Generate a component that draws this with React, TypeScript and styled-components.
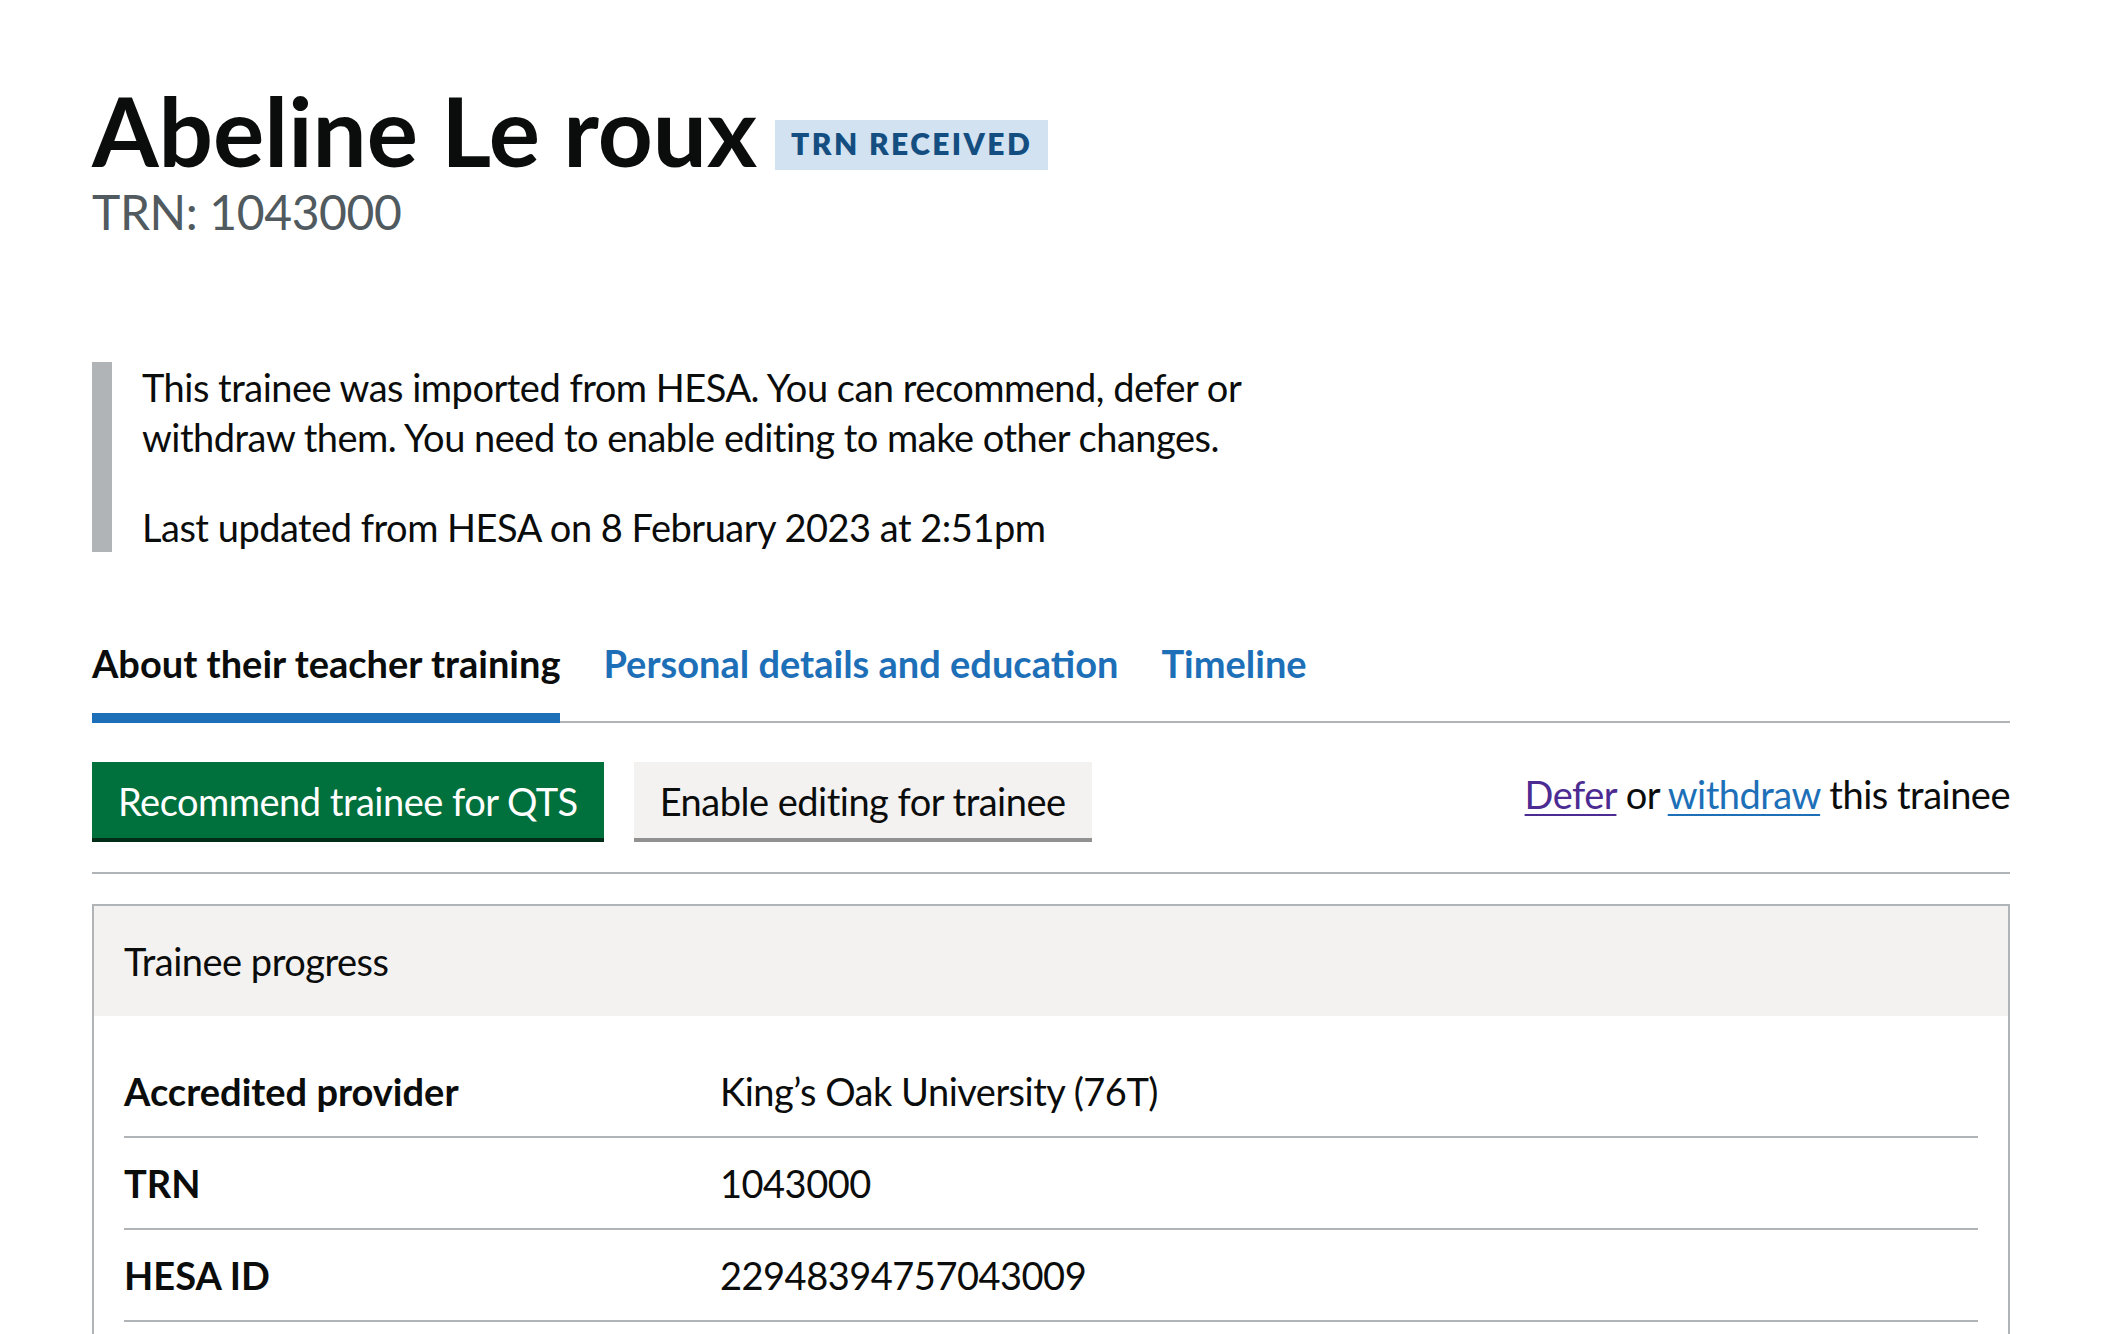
import styled, { createGlobalStyle } from "styled-components";

const FONT = `Lato, "Liberation Sans", Arial, sans-serif`;

const GlobalStyle = createGlobalStyle`
  html, body {
    margin: 0;
    padding: 0;
    background: #ffffff;
  }
  body {
    font-family: ${FONT};
    color: #0b0c0c;
  }
  * {
    box-sizing: border-box;
  }
`;

const Page = styled.main`
  max-width: 1918px;
  margin: 0 auto;
  padding-top: 80px;
`;

const TitleRow = styled.div`
  display: flex;
  align-items: flex-start;
  gap: 18px;
`;

const Title = styled.h1`
  margin: 0;
  font-size: 96px;
  line-height: 100px;
  font-weight: 700;
`;

const Tag = styled.strong`
  margin-top: 40px;
  padding: 8px 16px 12px 16px;
  font-size: 30px;
  line-height: 30px;
  font-weight: 800;
  letter-spacing: 2.4px;
  text-transform: uppercase;
  background: #d2e2f1;
  color: #144e81;
`;

const Caption = styled.p`
  margin: 7px 0 0;
  font-size: 48px;
  line-height: 50px;
  letter-spacing: -0.4px;
  color: #505a5f;
`;

const Inset = styled.div`
  margin-top: 125px;
  max-width: 1259px;
  padding: 0 30px;
  border-left: 20px solid #b1b4b6;
`;

const Para = styled.p`
  margin: 0 0 40px;
  font-size: 38px;
  line-height: 50px;
  letter-spacing: -0.5px;
  &:last-child {
    margin-bottom: 0;
  }
`;

const TabList = styled.ul`
  display: flex;
  gap: 43px;
  margin: 86px 0 0;
  padding: 0;
  list-style: none;
  border-bottom: 2px solid #b1b4b6;
`;

const Tab = styled.li<{ $active?: boolean }>`
  margin-bottom: -2px;
  padding-bottom: 25px;
  border-bottom: 10px solid ${({ $active }) => ($active ? "#1d70b8" : "transparent")};
  font-size: 38px;
  line-height: 50px;
  font-weight: 700;
  color: ${({ $active }) => ($active ? "#0b0c0c" : "#1d70b8")};
`;

const Actions = styled.div`
  display: flex;
  align-items: flex-start;
  gap: 30px;
  margin-top: 39px;
  padding-bottom: 34px;
  border-bottom: 2px solid #b1b4b6;
`;

const Button = styled.button<{ $secondary?: boolean }>`
  margin: 0;
  padding: 16px 22px 14px;
  border: 4px solid transparent;
  border-radius: 0;
  font-family: ${FONT};
  font-size: 38px;
  line-height: 38px;
  font-weight: 400;
  letter-spacing: -0.5px;
  cursor: pointer;
  background: ${({ $secondary }) => ($secondary ? "#f3f2f1" : "#00703c")};
  color: ${({ $secondary }) => ($secondary ? "#0b0c0c" : "#ffffff")};
  box-shadow: 0 4px 0 ${({ $secondary }) => ($secondary ? "#929191" : "#002d18")};
`;

const SideLinks = styled.p`
  margin: 0 0 0 auto;
  padding-top: 7px;
  font-size: 38px;
  line-height: 50px;
  letter-spacing: -0.5px;
`;

const Link = styled.a<{ $visited?: boolean }>`
  color: ${({ $visited }) => ($visited ? "#4c2c92" : "#1d70b8")};
  text-decoration: underline;
  text-decoration-thickness: 2px;
  text-underline-offset: 5px;
`;

const Card = styled.section`
  margin-top: 30px;
  border: 2px solid #b1b4b6;
`;

const CardHeader = styled.h2`
  margin: 0;
  padding: 30px;
  background: #f3f2f1;
  font-size: 38px;
  line-height: 50px;
  font-weight: 400;
  letter-spacing: -0.5px;
`;

const CardBody = styled.dl`
  margin: 0;
  padding: 30px 30px 60px;
`;

const Row = styled.div`
  display: grid;
  grid-template-columns: 596px 1fr;
  padding: 20px 0;
  border-bottom: 2px solid #b1b4b6;
  font-size: 38px;
  line-height: 50px;
`;

const Key = styled.dt`
  font-weight: 700;
`;

const Value = styled.dd`
  margin: 0;
  letter-spacing: -0.5px;
`;

const rows = [
  { key: "Accredited provider", value: "King’s Oak University (76T)" },
  { key: "TRN", value: "1043000" },
  { key: "HESA ID", value: "22948394757043009" },
];

const App = () => {
  return (
    <>
      <GlobalStyle />
      <Page>
        <TitleRow>
          <Title>Abeline Le roux</Title>
          <Tag>TRN received</Tag>
        </TitleRow>
        <Caption>TRN: 1043000</Caption>

        <Inset>
          <Para>
            This trainee was imported from HESA. You can recommend, defer or withdraw them. You
            need to enable editing to make other changes.
          </Para>
          <Para>Last updated from HESA on 8 February 2023 at 2:51pm</Para>
        </Inset>

        <TabList>
          <Tab $active>About their teacher training</Tab>
          <Tab>Personal details and education</Tab>
          <Tab>Timeline</Tab>
        </TabList>

        <Actions>
          <Button>Recommend trainee for QTS</Button>
          <Button $secondary>Enable editing for trainee</Button>
          <SideLinks>
            <Link href="#" $visited>
              Defer
            </Link>{" "}
            or <Link href="#">withdraw</Link> this trainee
          </SideLinks>
        </Actions>

        <Card>
          <CardHeader>Trainee progress</CardHeader>
          <CardBody>
            {rows.map((row) => (
              <Row key={row.key}>
                <Key>{row.key}</Key>
                <Value>{row.value}</Value>
              </Row>
            ))}
          </CardBody>
        </Card>
      </Page>
    </>
  );
};

export default App;
